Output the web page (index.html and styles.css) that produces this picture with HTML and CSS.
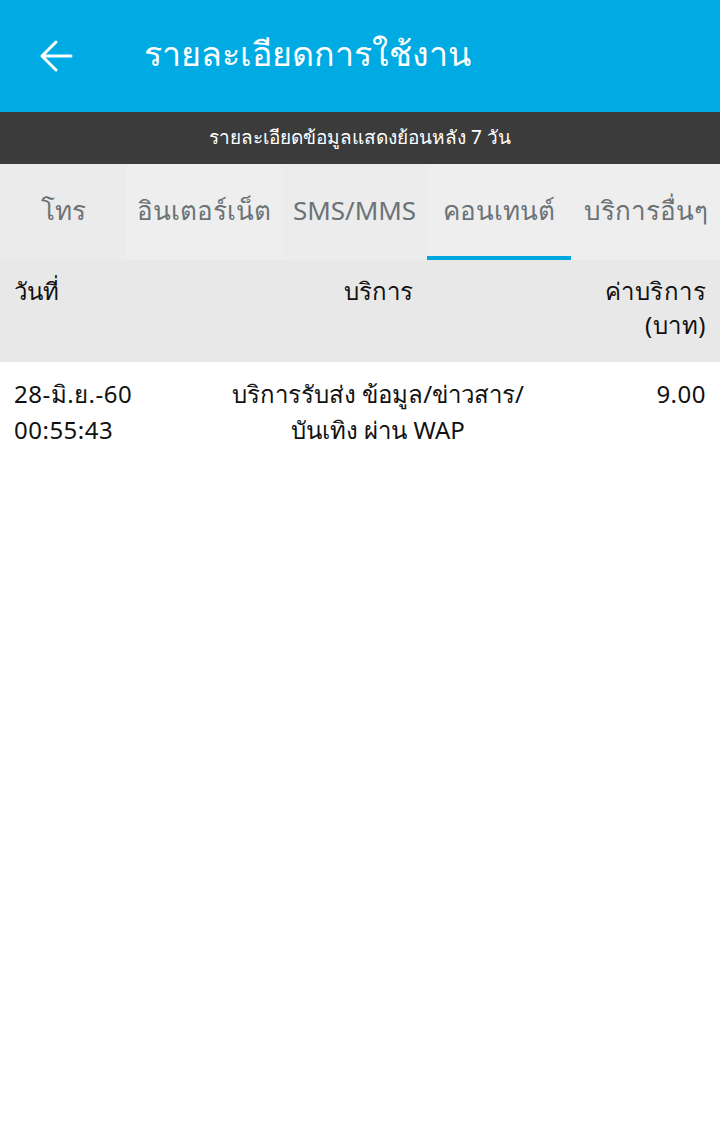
FILE: index.html
```html
<!DOCTYPE html>
<html lang="th">
<head>
    <meta charset="UTF-8">
    <meta name="viewport" content="width=device-width, initial-scale=1.0">
    <title>รายละเอียดการใช้งาน</title>
    <link rel="stylesheet" href="styles.css">
</head>
<body>
    <div class="topbar">
        <span class="back">
            <svg width="34" height="34" viewBox="0 0 34 34"><path d="M32 17H3M17 3L3 17l14 14" fill="none" stroke="#fff" stroke-width="3" stroke-linecap="round" stroke-linejoin="round"/></svg>
        </span>
        <h1>รายละเอียดการใช้งาน</h1>
    </div>
    <div class="notice">รายละเอียดข้อมูลแสดงย้อนหลัง 7 วัน</div>

    <div class="tabs">
        <div class="tab t1">โทร</div>
        <div class="tab t2">อินเตอร์เน็ต</div>
        <div class="tab t3">SMS/MMS</div>
        <div class="tab t4 active">คอนเทนต์</div>
        <div class="tab t5">บริการอื่นๆ</div>
    </div>

    <div class="row head">
        <div>วันที่</div>
        <div class="mid">บริการ</div>
        <div class="right">ค่าบริการ<br>(บาท)</div>
    </div>
    <div class="row">
        <div class="date">28-มิ.ย.-60<br>00:55:43</div>
        <div class="mid">บริการรับส่ง ข้อมูล/ข่าวสาร/<br>บันเทิง ผ่าน WAP</div>
        <div class="right">9.00</div>
    </div>
</body>
</html>
```

FILE: styles.css
```css
body {
    margin: 0;
    font-family: "Noto Sans", sans-serif;
    background: #fff;
    color: #111;
}
.topbar {
    background: #00abe4;
    height: 112px;
    display: flex;
    align-items: center;
    color: #fff;
}
.back { width: 144px; display: flex; padding-left: 39px; box-sizing: border-box; }
.topbar h1 { margin: 0 0 4px; font-size: 34px; font-weight: normal; }
.notice {
    background: #3b3b3b;
    color: #fff;
    height: 52px;
    line-height: 50px;
    text-align: center;
    font-size: 19px;
}
.tabs {
    display: flex;
    height: 96px;
    background: #ebebeb;
}
.tab {
    display: flex;
    align-items: center;
    justify-content: center;
    font-size: 26px;
    color: #6b7377;
    box-sizing: border-box;
    padding-bottom: 4px;
}
.t1 { width: 126px; }
.t2 { width: 156px; background: #eeeeee; }
.t3 { width: 145px; background: #ececec; }
.t4 { width: 144px; background: #eeeeee; }
.t5 { flex: 1; background: #eeeeee; }
.tab.active { border-bottom: 4px solid #00a8e0; padding-bottom: 0; }
.row {
    display: grid;
    grid-template-columns: 190px 348px 1fr;
    padding: 14px 14px 0;
    font-size: 24px;
    line-height: 36px;
    min-height: 102px;
    box-sizing: border-box;
}
.row.head { background: #e8e8e8; line-height: 34px; }
.date { letter-spacing: 0.5px; }
.mid { text-align: center; }
.right { text-align: right; letter-spacing: 0.5px; }
```
